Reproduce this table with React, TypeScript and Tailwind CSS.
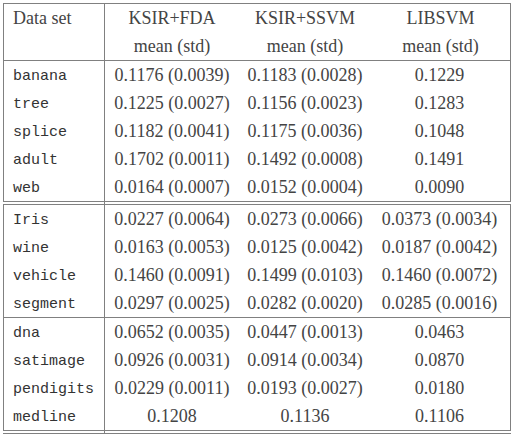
import React from "react";

type Row = [string, string, string, string];

const groups: Row[][] = [
  [
    ["banana", "0.1176 (0.0039)", "0.1183 (0.0028)", "0.1229"],
    ["tree", "0.1225 (0.0027)", "0.1156 (0.0023)", "0.1283"],
    ["splice", "0.1182 (0.0041)", "0.1175 (0.0036)", "0.1048"],
    ["adult", "0.1702 (0.0011)", "0.1492 (0.0008)", "0.1491"],
    ["web", "0.0164 (0.0007)", "0.0152 (0.0004)", "0.0090"],
  ],
  [
    ["Iris", "0.0227 (0.0064)", "0.0273 (0.0066)", "0.0373 (0.0034)"],
    ["wine", "0.0163 (0.0053)", "0.0125 (0.0042)", "0.0187 (0.0042)"],
    ["vehicle", "0.1460 (0.0091)", "0.1499 (0.0103)", "0.1460 (0.0072)"],
    ["segment", "0.0297 (0.0025)", "0.0282 (0.0020)", "0.0285 (0.0016)"],
  ],
  [
    ["dna", "0.0652 (0.0035)", "0.0447 (0.0013)", "0.0463"],
    ["satimage", "0.0926 (0.0031)", "0.0914 (0.0034)", "0.0870"],
    ["pendigits", "0.0229 (0.0011)", "0.0193 (0.0027)", "0.0180"],
    ["medline", "0.1208", "0.1136", "0.1106"],
  ],
];

const grid = "grid grid-cols-[101px_134px_132px_1fr]";
const serif = "font-['Liberation_Serif',serif] text-[18px]";

function TableRow({ row }: { row: Row }) {
  return (
    <div className={`${grid} h-[28px] leading-[28px]`}>
      <div className="border-r border-[#808080] pl-[9px] font-['Liberation_Mono',monospace] text-[15px] leading-[31px] text-[#333]">
        {row[0]}
      </div>
      <div className={`${serif} text-center`}>{row[1]}</div>
      <div className={`${serif} text-center`}>{row[2]}</div>
      <div className={`${serif} text-center pr-[2px]`}>{row[3]}</div>
    </div>
  );
}

export default function App() {
  return (
    <div className="w-[514px] h-[436px] bg-white pt-[3px] pl-[3px] text-[#444] overflow-hidden">
      <div className="w-[508px]">
        <div className="border border-[#808080]">
          <div className={`${grid} leading-[28px]`}>
            <div className={`border-r border-[#808080] pl-[9px] ${serif}`}>
              <div className="h-[28px]">Data set</div>
              <div className="h-[28px]"></div>
            </div>
            {["KSIR+FDA", "KSIR+SSVM", "LIBSVM"].map((h) => (
              <div key={h} className={`${serif} text-center`}>
                <div className="h-[28px]">{h}</div>
                <div className="h-[28px]">mean (std)</div>
              </div>
            ))}
          </div>
          <div className="border-t border-[#808080]">
            {groups[0].map((r) => (
              <TableRow key={r[0]} row={r} />
            ))}
          </div>
        </div>
        <div className="mt-[2px] border border-[#808080]">
          {groups[1].map((r) => (
            <TableRow key={r[0]} row={r} />
          ))}
          <div className="border-t border-[#808080]">
            {groups[2].map((r) => (
              <TableRow key={r[0]} row={r} />
            ))}
          </div>
        </div>
        <div className="mt-[2px] border-t border-[#808080]"></div>
      </div>
    </div>
  );
}
